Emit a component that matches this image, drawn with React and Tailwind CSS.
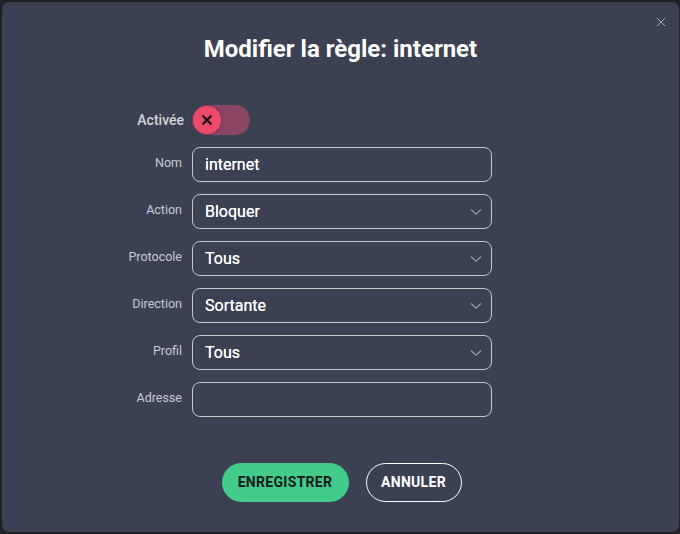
import React from "react";

function Chevron() {
  return (
    <svg width="12" height="8" viewBox="0 0 12 8" className="shrink-0">
      <path d="M1 1.5 L6 6.2 L11 1.5" fill="none" stroke="#9aa0ad" strokeWidth="1.1" />
    </svg>
  );
}

function Row({ label, value, select }) {
  return (
    <div className="flex items-center">
      <div className="w-[181px] pr-[1px] text-right text-[12.5px] text-[#c9ccd4] -mt-[3px]">{label}</div>
      <div className="ml-[9px] flex h-[35px] w-[300px] items-center justify-between rounded-[8px] border border-[#c4c7cf] pl-[12px] pr-[9px]">
        <span className="text-[16px] font-normal text-white [text-shadow:0_0_0.4px_white]">{value}</span>
        {select && <Chevron />}
      </div>
    </div>
  );
}

export default function App() {
  return (
    <div className="h-[534px] w-[680px] bg-[#1f2127] p-[2px] pr-[1px]" style={{ fontFamily: "Roboto, 'Noto Sans', sans-serif" }}>
      <div className="relative flex h-[530px] flex-col rounded-[7px] bg-[#3b4052]">
        <svg className="absolute right-[13px] top-[15px]" width="10" height="10" viewBox="0 0 10 10">
          <path d="M1 1 L9 9 M9 1 L1 9" stroke="#a7abb6" strokeWidth="1" />
        </svg>
        <h1 className="mt-[29px] text-center text-[24px] font-bold tracking-[0px] text-white">Modifier la règle: internet</h1>
        <div className="mt-[38px] flex items-center">
          <div className="w-[182px] text-right text-[14px] font-medium text-[#d2d5dc]">Activée</div>
          <div className="ml-[8px] relative h-[30px] w-[58px] rounded-full bg-[#8a4663]">
            <div className="absolute left-[1px] top-[1px] flex h-[28px] w-[28px] items-center justify-center rounded-full bg-[#ee4a6c] shadow-[0_0_3px_rgba(0,0,0,0.3)]">
              <svg width="12" height="12" viewBox="0 0 12 12">
                <path d="M1.5 1.5 L10.5 10.5 M10.5 1.5 L1.5 10.5" stroke="#111" strokeWidth="2" />
              </svg>
            </div>
          </div>
        </div>
        <div className="mt-[12px] flex flex-col gap-[12px]">
          <Row label="Nom" value="internet" />
          <Row label="Action" value="Bloquer" select />
          <Row label="Protocole" value="Tous" select />
          <Row label="Direction" value="Sortante" select />
          <Row label="Profil" value="Tous" select />
          <Row label="Adresse" value="" />
        </div>
        <div className="mt-[46px] flex justify-center gap-[17px] pl-[2px]">
          <button className="h-[39px] w-[127px] rounded-full bg-[#43cb89] text-[14px] font-bold tracking-[0.3px] text-[#15181c]">ENREGISTRER</button>
          <button className="h-[39px] w-[96px] rounded-full border border-white text-[14px] font-bold tracking-[0.3px] text-white">ANNULER</button>
        </div>
      </div>
    </div>
  );
}
